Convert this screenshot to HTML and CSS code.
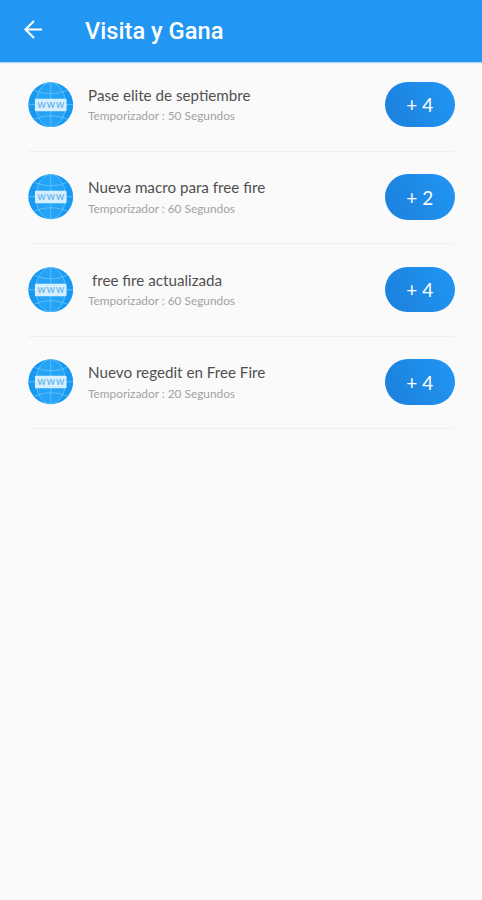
FILE: index.html
```html
<!DOCTYPE html>
<html lang="es">
<head>
<meta charset="utf-8">
<title>Visita y Gana</title>
<link rel="stylesheet" href="styles.css">
</head>
<body>
<svg width="0" height="0" class="defs" aria-hidden="true">
  <defs>
    <symbol id="globe" viewBox="0 0 46 46">
      <circle cx="23" cy="23" r="22.700" fill="#1698f3"/>
      <ellipse cx="23" cy="23" rx="15" ry="22.500" fill="#25a3f7"/>
      <g fill="none" stroke="#5dbefa" stroke-width="1">
        <ellipse cx="23" cy="23" rx="15" ry="22.500"/>
        <path d="M23 .5v45M.5 23h45M6.500 8.500Q23 15.500 39.500 8.500M6.500 37.500Q23 30.500 39.500 37.500"/>
      </g>
      <rect x="7" y="17" width="32" height="12.500" rx="1" fill="#d5effe"/>
    </symbol>
  </defs>
</svg>
<header class="appbar">
  <svg class="back" viewBox="0 0 20 20"><path d="M19 10H2M10.500 1L1.500 10L10.500 19"/></svg>
  <h1 class="title">Visita y Gana</h1>
</header>
<main class="list">
  <article class="row">
    <svg class="icon" viewBox="0 0 46 46"><use href="#globe"/><text x="23" y="26.500" textLength="27">WWW</text></svg>
    <div class="info"><h2 class="name">Pase elite de septiembre</h2><p class="timer">Temporizador : 50 Segundos</p></div>
    <span class="pill">+ 4</span>
  </article>
  <article class="row">
    <svg class="icon" viewBox="0 0 46 46"><use href="#globe"/><text x="23" y="26.500" textLength="27">WWW</text></svg>
    <div class="info"><h2 class="name">Nueva macro para free fire</h2><p class="timer">Temporizador : 60 Segundos</p></div>
    <span class="pill">+ 2</span>
  </article>
  <article class="row">
    <svg class="icon" viewBox="0 0 46 46"><use href="#globe"/><text x="23" y="26.500" textLength="27">WWW</text></svg>
    <div class="info"><h2 class="name"> free fire actualizada</h2><p class="timer">Temporizador : 60 Segundos</p></div>
    <span class="pill">+ 4</span>
  </article>
  <article class="row">
    <svg class="icon" viewBox="0 0 46 46"><use href="#globe"/><text x="23" y="26.500" textLength="27">WWW</text></svg>
    <div class="info"><h2 class="name">Nuevo regedit en Free Fire</h2><p class="timer">Temporizador : 20 Segundos</p></div>
    <span class="pill">+ 4</span>
  </article>
</main>
</body>
</html>
```
FILE: styles.css
```css
* { box-sizing: border-box; margin: 0; padding: 0; }
body { background: #fafafa; font-family: Lato, sans-serif; min-height: 900px; }
.defs { display: none; }
.appbar {
  display: flex;
  align-items: center;
  height: 62px;
  padding: 0 24px 3px;
  background: #2196f3;
  box-shadow: 0 1px 1px rgba(33, 150, 243, .35);
}
.back { width: 19px; height: 19px; margin-right: 42px; fill: none; stroke: #fff; stroke-width: 2.2; }
.title { padding-top: 2px; font: 500 23.7px/30px Roboto, sans-serif; color: #fff; white-space: nowrap; }
.list { padding: 0 27.5px 0 28px; }
.row {
  display: flex;
  align-items: flex-start;
  height: 92.5px;
  padding-top: 22.5px;
  border-bottom: 1px solid #f0f0f0;
}
.row:first-child { height: 89.5px; padding-top: 19.5px; }
.icon { flex: none; width: 45.5px; height: 45.5px; margin-right: 14.5px; }
.icon text { font: 500 8px Lato, sans-serif; fill: #4fa9e8; text-anchor: middle; }
.info { flex: 1; padding-top: 3.3px; }
.name { font-size: 15.2px; line-height: 21px; font-weight: 400; color: #505050; white-space: pre; }
.timer { margin-top: 1.5px; font-size: 11.85px; line-height: 17px; color: #a2a2a2; white-space: nowrap; }
.pill {
  display: flex;
  align-items: center;
  justify-content: center;
  width: 69.5px;
  height: 45.5px;
  padding-top: 1px;
  border-radius: 23px;
  background: linear-gradient(65deg, #1b80dc, #2196f3);
  color: #fff;
  font-size: 19px;
}
```
